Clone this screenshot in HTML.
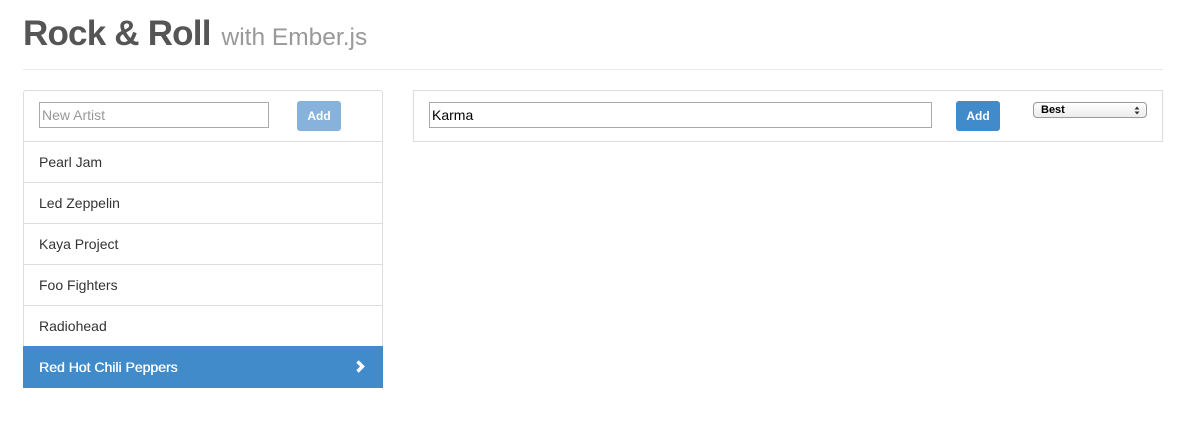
<!DOCTYPE html>
<html><head><meta charset="utf-8">
<style>
*{box-sizing:border-box;margin:0;padding:0}
body{width:1204px;height:437px;background:#fff;font-family:"Liberation Sans",Helvetica,Arial,sans-serif;position:relative;overflow:hidden;color:#333}
.abs{position:absolute}
h1{position:absolute;left:23px;top:14px;font-size:35px;font-weight:bold;color:#555;letter-spacing:-0.8px;line-height:40px;white-space:nowrap}
h1 small{font-size:24.5px;font-weight:normal;color:#999;letter-spacing:0;margin-left:2px}
.hr{left:23px;top:69px;width:1140px;height:1px;background:#e8e8e8}
.panel{border:1px solid #ddd;border-radius:3px;background:#fff}
.inp{border:1px solid #aaa;background:#fff;font-size:14px;padding:2px 2px;line-height:20px}
.btn{border-radius:3px;color:#fff;font-size:12px;font-weight:bold;text-align:center}
.item{position:absolute;left:23px;width:360px;height:41px;border-top:1px solid #ddd;font-size:14px;line-height:40px;padding-left:16px;color:#333}
</style></head><body>
<h1>Rock &amp; Roll <small>with Ember.js</small></h1>
<div class="abs hr"></div>

<div class="abs panel" style="left:23px;top:90px;width:360px;height:298px"></div>
<div class="abs inp" style="left:39px;top:102px;width:230px;height:26px;color:#999">New Artist</div>
<div class="abs btn" style="left:297px;top:101px;width:44px;height:30px;line-height:30px;background:#86b2dc">Add</div>

<div class="item" style="top:141px">Pearl Jam</div>
<div class="item" style="top:182px">Led Zeppelin</div>
<div class="item" style="top:223px">Kaya Project</div>
<div class="item" style="top:264px">Foo Fighters</div>
<div class="item" style="top:305px">Radiohead</div>
<div class="item" style="top:346px;height:42px;background:#428bca;color:#fff;border-top:none;line-height:42px;text-shadow:0.4px 0 0 #fff">Red Hot Chili Peppers
<svg class="abs" style="left:332px;top:14px" width="11" height="13" viewBox="0 0 11 13"><path d="M2.5 1.5 L7.5 6.5 L2.5 11.5" stroke="#fff" stroke-width="3.4" fill="none"/></svg></div>

<div class="abs panel" style="left:413px;top:90px;width:750px;height:52px;border-radius:0"></div>
<div class="abs inp" style="left:429px;top:102px;width:503px;height:26px;color:#000">Karma</div>
<div class="abs btn" style="left:956px;top:101px;width:44px;height:30px;line-height:30px;background:#428bca">Add</div>
<div class="abs" style="left:1033px;top:102px;width:114px;height:16px;border:1px solid #999;border-radius:4px;background:linear-gradient(#fff,#ececec);font-size:11px;font-weight:bold;line-height:14px;padding-left:7px;color:#000">Best
<svg class="abs" style="right:6px;top:3px" width="6" height="9" viewBox="0 0 6 9"><path d="M0.5 3.5 L3 0.5 L5.5 3.5Z M0.5 5.5 L3 8.5 L5.5 5.5Z" fill="#333"/></svg></div>
</body></html>
